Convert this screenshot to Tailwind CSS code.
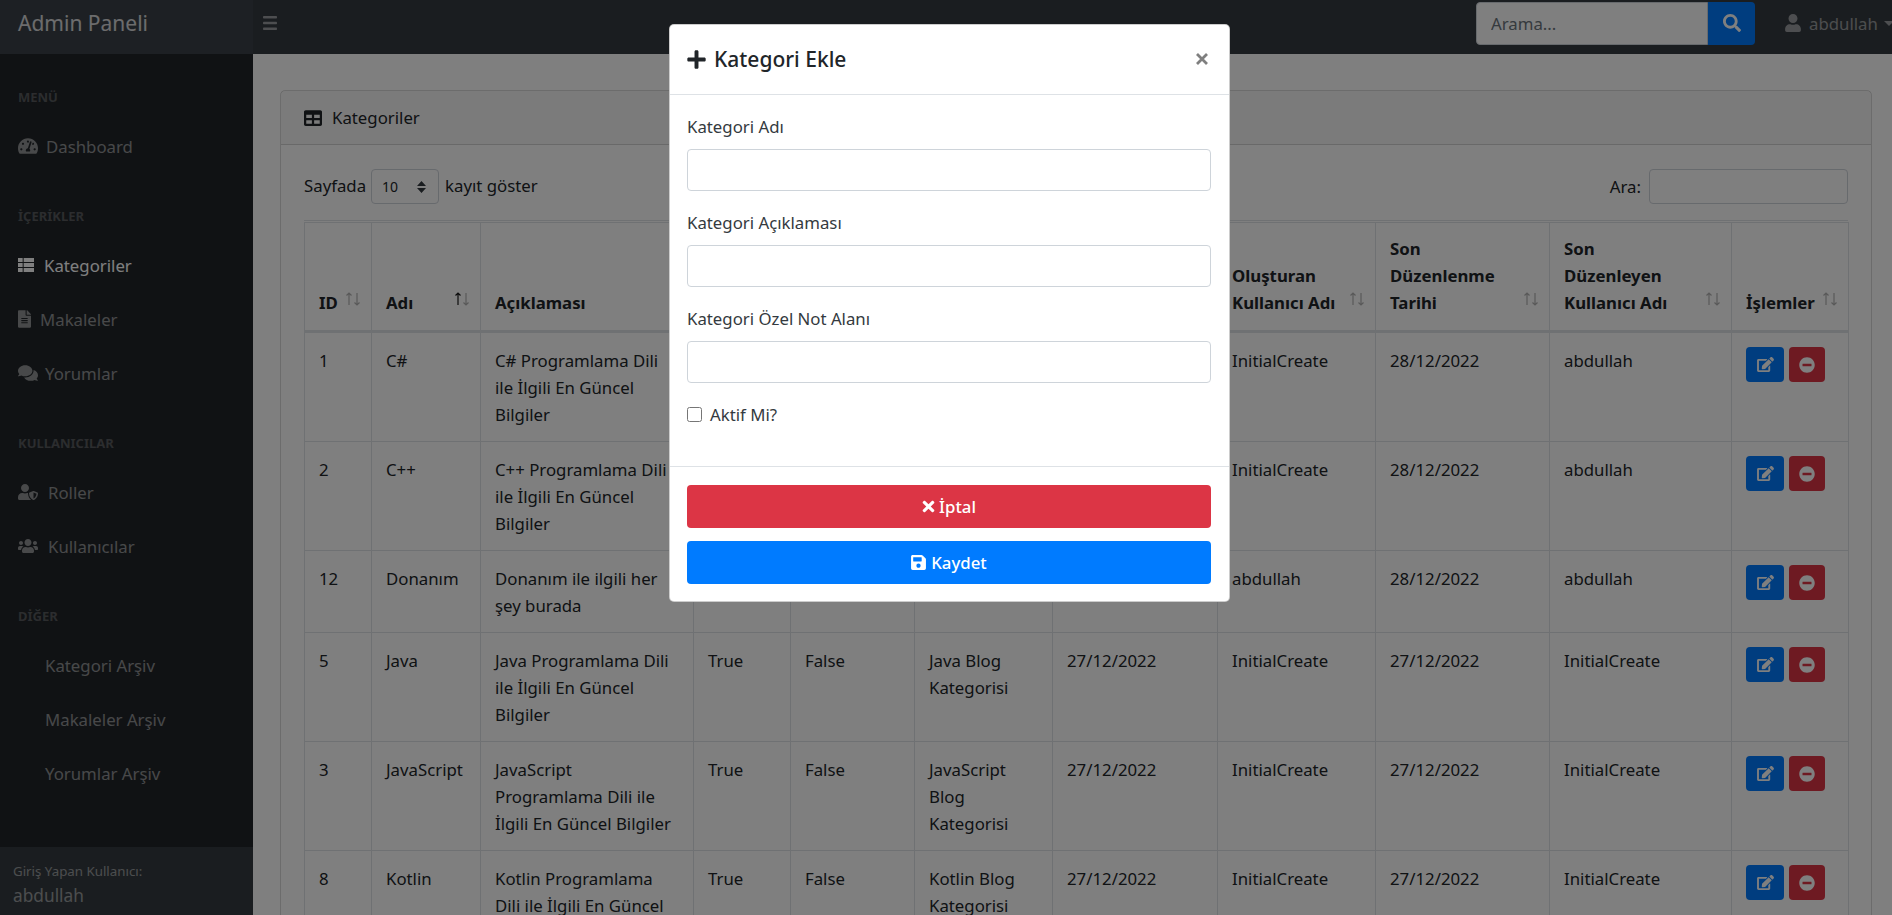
<!DOCTYPE html>
<html lang="tr">
<head>
    <meta charset="UTF-8">
    <title>Admin Paneli</title>
    <script src="https://cdn.jsdelivr.net/npm/@tailwindcss/browser@4"></script>
</head>
<body class="relative h-[915px] overflow-hidden bg-white font-['Noto_Sans',sans-serif] text-[16.8px] leading-[27px] text-[#212529]">

    <svg class="hidden">
        <symbol id="i-plus" viewBox="0 0 448 512"><path d="M416 208H272V64c0-17.67-14.33-32-32-32h-32c-17.67 0-32 14.33-32 32v144H32c-17.67 0-32 14.33-32 32v32c0 17.67 14.33 32 32 32h144v144c0 17.67 14.33 32 32 32h32c17.67 0 32-14.33 32-32V304h144c17.67 0 32-14.33 32-32v-32c0-17.67-14.33-32-32-32z"/></symbol>
        <symbol id="i-search" viewBox="0 0 512 512"><path d="M505 442.7L405.3 343c-4.5-4.5-10.6-7-17-7H372c27.6-35.3 44-79.7 44-128C416 93.1 322.9 0 208 0S0 93.1 0 208s93.1 208 208 208c48.3 0 92.7-16.4 128-44v16.3c0 6.4 2.5 12.5 7 17l99.7 99.7c9.4 9.4 24.6 9.4 33.9 0l28.3-28.3c9.4-9.4 9.4-24.6.1-34zM208 336c-70.7 0-128-57.2-128-128 0-70.7 57.2-128 128-128 70.7 0 128 57.2 128 128 0 70.7-57.2 128-128 128z"/></symbol>
        <symbol id="i-user" viewBox="0 0 448 512"><path d="M224 256c70.7 0 128-57.3 128-128S294.7 0 224 0 96 57.3 96 128s57.3 128 128 128zm89.6 32h-16.7c-22.2 10.2-46.9 16-72.9 16s-50.6-5.8-72.9-16h-16.7C60.2 288 0 348.2 0 422.4V464c0 26.5 21.5 48 48 48h352c26.5 0 48-21.5 48-48v-41.6c0-74.2-60.2-134.4-134.4-134.4z"/></symbol>
        <symbol id="i-times" viewBox="0 0 352 512"><path d="M242.72 256l100.07-100.07c12.28-12.28 12.28-32.19 0-44.48l-22.24-22.24c-12.28-12.28-32.19-12.28-44.48 0L176 189.28 75.93 89.21c-12.28-12.28-32.19-12.28-44.48 0L9.21 111.45c-12.28 12.28-12.28 32.19 0 44.48L109.28 256 9.21 356.07c-12.28 12.28-12.28 32.19 0 44.48l22.24 22.24c12.28 12.28 32.2 12.28 44.48 0L176 322.72l100.07 100.07c12.28 12.28 32.2 12.28 44.48 0l22.24-22.24c12.28-12.28 12.28-32.19 0-44.48L242.72 256z"/></symbol>
        <symbol id="i-save" viewBox="0 0 448 512"><path d="M433.941 129.941l-83.882-83.882A48 48 0 0 0 316.118 32H48C21.49 32 0 53.49 0 80v352c0 26.51 21.49 48 48 48h352c26.51 0 48-21.49 48-48V163.882a48 48 0 0 0-14.059-33.941zM224 416c-35.346 0-64-28.654-64-64 0-35.346 28.654-64 64-64s64 28.654 64 64c0 35.346-28.654 64-64 64zm96-304.52V212c0 6.627-5.373 12-12 12H76c-6.627 0-12-5.373-12-12V108c0-6.627 5.373-12 12-12h228.52c3.183 0 6.235 1.264 8.485 3.515l3.48 3.48A11.996 11.996 0 0 1 320 111.48z"/></symbol>
        <symbol id="i-minus" viewBox="0 0 512 512"><path d="M256 8C119 8 8 119 8 256s111 248 248 248 248-111 248-248S393 8 256 8zM124 296c-6.6 0-12-5.4-12-12v-56c0-6.6 5.4-12 12-12h264c6.6 0 12 5.4 12 12v56c0 6.6-5.4 12-12 12H124z"/></symbol>
        <symbol id="i-edit" viewBox="0 0 576 512"><path d="M402.6 83.2l90.2 90.2c3.8 3.8 3.8 10 0 13.8L274.4 405.6l-92.8 10.3c-12.4 1.4-22.9-9.1-21.5-21.5l10.3-92.8L388.8 83.2c3.8-3.8 10-3.8 13.8 0zm162-22.9l-48.8-48.8c-15.2-15.2-39.9-15.2-55.2 0l-35.4 35.4c-3.8 3.8-3.8 10 0 13.8l90.2 90.2c3.8 3.8 10 3.8 13.8 0l35.4-35.4c15.2-15.3 15.2-40 0-55.2zM384 346.2V448H64V128h229.8c3.2 0 6.2-1.3 8.5-3.5l40-40c7.6-7.6 2.2-20.5-8.5-20.5H48C21.5 64 0 85.5 0 112v352c0 26.5 21.5 48 48 48h352c26.5 0 48-21.5 48-48V306.2c0-10.7-12.9-16-20.5-8.5l-40 40c-2.2 2.3-3.5 5.3-3.5 8.5z"/></symbol>
        <symbol id="i-table" viewBox="0 0 512 512"><path d="M464 32H48C21.49 32 0 53.49 0 80v352c0 26.51 21.49 48 48 48h416c26.51 0 48-21.49 48-48V80c0-26.51-21.49-48-48-48zM224 416H64v-96h160v96zm0-160H64v-96h160v96zm224 160H288v-96h160v96zm0-160H288v-96h160v96z"/></symbol>
        <symbol id="i-list" viewBox="0 0 512 512"><path d="M0 32h149v128H0zM181 32h331v128H181zM0 192h149v128H0zM181 192h331v128H181zM0 352h149v128H0zM181 352h331v128H181z"/></symbol>
        <symbol id="i-file" viewBox="0 0 384 512"><path d="M224 136V0H24C10.7 0 0 10.7 0 24v464c0 13.3 10.7 24 24 24h336c13.3 0 24-10.7 24-24V160H248c-13.2 0-24-10.8-24-24zm64 236c0 6.6-5.4 12-12 12H108c-6.6 0-12-5.4-12-12v-8c0-6.6 5.4-12 12-12h168c6.6 0 12 5.4 12 12v8zm0-64c0 6.6-5.4 12-12 12H108c-6.6 0-12-5.4-12-12v-8c0-6.6 5.4-12 12-12h168c6.6 0 12 5.4 12 12v8zm0-72v8c0 6.6-5.4 12-12 12H108c-6.6 0-12-5.4-12-12v-8c0-6.6 5.4-12 12-12h168c6.6 0 12 5.4 12 12zm96-114.1v6.1H256V0h6.1c6.4 0 12.5 2.5 17 7l97.9 98c4.5 4.5 7 10.6 7 16.9z"/></symbol>
        <symbol id="i-comments" viewBox="0 0 576 512"><path d="M416 192c0-88.4-93.1-160-208-160S0 103.6 0 192c0 34.3 14.1 65.9 38 92-13.4 30.2-35.5 54.2-35.8 54.5-2.2 2.3-2.8 5.7-1.5 8.7S4.8 352 8 352c36.6 0 66.9-12.3 88.7-25 32.2 15.7 70.3 25 111.3 25 114.9 0 208-71.6 208-160zm122 220c23.9-26 38-57.7 38-92 0-66.9-53.5-124.2-129.3-148.1.9 6.6 1.3 13.3 1.3 20.1 0 105.9-107.7 192-240 192-10.8 0-21.3-.8-31.7-1.9C207.8 439.6 281.8 480 368 480c41 0 79.1-9.2 111.3-25 21.8 12.7 52.1 25 88.7 25 3.2 0 6.1-1.9 7.3-4.8 1.3-2.9.7-6.3-1.5-8.7-.3-.3-22.4-24.2-35.8-54.5z"/></symbol>
        <symbol id="i-shield" viewBox="0 0 640 512"><path d="M622.3 271.1l-115.2-45c-4.1-1.6-12.6-3.7-22.2 0l-115.2 45c-10.7 4.2-17.7 14-17.7 24.9 0 111.6 68.7 188.8 132.9 213.9 9.6 3.7 18 1.6 22.2 0C558.4 489.9 640 420.5 640 296c0-10.9-7-20.7-17.7-24.9zM496 462.4V273.3l95.5 37.3c-5.6 86.9-58.1 135.5-95.5 151.8zM224 256c70.7 0 128-57.3 128-128S294.7 0 224 0 96 57.3 96 128s57.3 128 128 128zm96 40c0-2.5.8-4.8 1.1-7.2-2.5-.1-4.9-.8-7.5-.8h-16.7c-22.2 10.2-46.9 16-72.9 16s-50.6-5.8-72.9-16h-16.7C60.2 288 0 348.2 0 422.4V464c0 26.5 21.5 48 48 48h352c6.8 0 13.3-1.5 19.2-4-54-42.9-99.2-116.7-99.2-212z"/></symbol>
        <symbol id="i-users" viewBox="0 0 640 512"><path d="M96 224c35.3 0 64-28.7 64-64s-28.7-64-64-64-64 28.7-64 64 28.7 64 64 64zm448 0c35.3 0 64-28.7 64-64s-28.7-64-64-64-64 28.7-64 64 28.7 64 64 64zm32 32h-64c-17.6 0-33.5 7.1-45.1 18.6 40.3 22.1 68.9 62 75.1 109.4h66c17.7 0 32-14.3 32-32v-32c0-35.3-28.7-64-64-64zm-256 0c61.9 0 112-50.1 112-112S381.9 32 320 32 208 82.1 208 144s50.1 112 112 112zm76.8 32h-8.3c-20.8 10-43.9 16-68.5 16s-47.6-6-68.5-16h-8.3C179.6 288 128 339.6 128 403.2V432c0 26.5 21.5 48 48 48h288c26.5 0 48-21.5 48-48v-28.8c0-63.6-51.6-115.2-115.2-115.2zm-223.7-13.4C161.5 263.1 145.6 256 128 256H64c-35.3 0-64 28.7-64 64v32c0 17.7 14.3 32 32 32h65.9c6.3-47.4 34.9-87.3 75.2-109.4z"/></symbol>
        <symbol id="i-gauge" viewBox="0 0 576 512"><path d="M288 32C128.94 32 0 160.94 0 320c0 52.8 14.25 102.26 39.06 144.8 5.61 9.62 16.3 15.2 27.44 15.2h443c11.14 0 21.83-5.58 27.44-15.2C561.75 422.26 576 372.8 576 320c0-159.06-128.94-288-288-288zm0 64c14.71 0 26.58 10.13 30.32 23.65-1.11 2.26-2.64 4.23-3.45 6.67l-9.22 27.67c-5.13 3.49-10.97 6.01-17.64 6.01-17.67 0-32-14.33-32-32S270.33 96 288 96zM96 384c-17.67 0-32-14.33-32-32s14.33-32 32-32 32 14.33 32 32-14.33 32-32 32zm48-160c-17.67 0-32-14.33-32-32s14.33-32 32-32 32 14.33 32 32-14.33 32-32 32zm246.77-72.41l-61.33 184C343.13 347.33 352 364.54 352 384c0 11.72-3.38 22.55-8.88 32H232.88c-5.5-9.45-8.88-20.28-8.88-32 0-33.94 26.5-61.43 59.9-63.59l61.34-184.01c4.17-12.56 17.73-19.45 30.36-15.17 12.57 4.19 19.35 17.79 15.17 30.36zm14.66 57.2l15.52-46.55c3.47-1.29 7.13-2.23 11.05-2.23 17.67 0 32 14.33 32 32s-14.33 32-32 32c-11.38-.01-20.89-6.28-26.57-15.22zM480 384c-17.67 0-32-14.33-32-32s14.33-32 32-32 32 14.33 32 32-14.33 32-32 32z"/></symbol>
        <symbol id="i-sort" viewBox="0 0 16 14"><path d="M4 1v12M1.500 3.500 4 1l2.500 2.500" fill="none" stroke="currentColor" stroke-width="1.200"/></symbol>
        <symbol id="i-sort2" viewBox="0 0 16 14"><path d="M12 1v12M9.500 10.500 12 13l2.500-2.500" fill="none" stroke="currentColor" stroke-width="1.200"/></symbol>
    </svg>

    <nav class="flex h-[54px] items-center bg-[#343a40] pb-[8px]">
        <div class="-mb-[8px] flex h-[54px] w-[253px] shrink-0 items-center bg-[#3a4148] pb-[8px] pl-[18px]">
            <a class="text-[21px] whitespace-nowrap text-white/80">Admin Paneli</a>
        </div>
        <svg class="ml-[10px] h-[14px] w-[14px] text-white/50" viewBox="0 0 14 14" fill="currentColor"><rect width="14" height="2.600" rx="0.800"/><rect y="5.700" width="14" height="2.600" rx="0.800"/><rect y="11.400" width="14" height="2.600" rx="0.800"/></svg>
        <div class="ml-auto flex h-[43px] w-[279px] items-stretch">
            <input class="min-w-0 flex-1 rounded-l-[4px] border border-[#ced4da] bg-white px-[14px] text-[16.8px] placeholder:text-[#6c757d]" placeholder="Arama...">
            <button class="flex w-[47px] items-center justify-center rounded-r-[4px] bg-[#007bff] text-white"><svg class="h-[18px] w-[18px]" fill="currentColor"><use href="#i-search"/></svg></button>
        </div>
        <div class="ml-[30px] flex w-[107px] shrink-0 items-center overflow-hidden text-white/50">
            <svg class="h-[18px] w-[16px] shrink-0" fill="currentColor"><use href="#i-user"/></svg>
            <span class="ml-[8px]">abdullah</span>
            <span class="ml-[6px] h-0 w-0 border-x-[5px] border-t-[5px] border-x-transparent border-t-white/50"></span>
        </div>
    </nav>

    <div class="flex h-[861px]">
        <aside class="flex w-[253px] shrink-0 flex-col bg-[#212529] text-white/50">
            <div class="flex h-[66px] items-center pt-[20px] pl-[18px] text-[13px] font-bold text-white/25">MENÜ</div>
            <a class="flex h-[54px] items-center pb-[2px] pl-[18px]"><svg class="h-[18px] w-[20px]" fill="currentColor"><use href="#i-gauge"/></svg><span class="ml-[8px]">Dashboard</span></a>
            <div class="flex h-[65px] items-center pt-[20px] pl-[18px] text-[13px] font-bold text-white/25">İÇERİKLER</div>
            <a class="flex h-[54px] items-center pb-[2px] pl-[18px] text-white"><svg class="h-[18px] w-[16px]" fill="currentColor"><use href="#i-list"/></svg><span class="ml-[10px]">Kategoriler</span></a>
            <a class="flex h-[54px] items-center pb-[2px] pl-[18px]"><svg class="h-[18px] w-[13px]" fill="currentColor"><use href="#i-file"/></svg><span class="ml-[9px]">Makaleler</span></a>
            <a class="flex h-[54px] items-center pb-[2px] pl-[18px]"><svg class="h-[18px] w-[20px]" fill="currentColor"><use href="#i-comments"/></svg><span class="ml-[7px]">Yorumlar</span></a>
            <div class="flex h-[65px] items-center pt-[20px] pl-[18px] text-[13px] font-bold text-white/25">KULLANICILAR</div>
            <a class="flex h-[54px] items-center pb-[2px] pl-[18px]"><svg class="h-[18px] w-[20px]" fill="currentColor"><use href="#i-shield"/></svg><span class="ml-[10px]">Roller</span></a>
            <a class="flex h-[54px] items-center pb-[2px] pl-[18px]"><svg class="h-[18px] w-[20px]" fill="currentColor"><use href="#i-users"/></svg><span class="ml-[10px]">Kullanıcılar</span></a>
            <div class="flex h-[65px] items-center pt-[20px] pl-[18px] text-[13px] font-bold text-white/25">DİĞER</div>
            <a class="flex h-[54px] items-center pb-[2px] pl-[45px]">Kategori Arşiv</a>
            <a class="flex h-[54px] items-center pb-[2px] pl-[45px]">Makaleler Arşiv</a>
            <a class="flex h-[54px] items-center pb-[2px] pl-[45px]">Yorumlar Arşiv</a>
            <div class="mt-auto h-[68px] bg-[#343a40] pt-[12px] pl-[13px]">
                <div class="text-[13.3px] leading-[24px]">Giriş Yapan Kullanıcı:</div>
                <div class="text-[17.3px] leading-[26px]">abdullah</div>
            </div>
        </aside>

        <main class="flex-1 overflow-hidden pt-[36px] pl-[27px]">
            <div class="w-[1592px] rounded-t-[5px] border border-black/15">
                <div class="flex h-[54px] items-center border-b border-black/15 bg-black/3 pl-[23px]">
                    <svg class="h-[18px] w-[18px]" fill="currentColor"><use href="#i-table"/></svg>
                    <span class="ml-[10px]">Kategoriler</span>
                </div>
                <div class="px-[23px] pt-[24px]">
                    <div class="flex h-[35px] items-center">
                        <span class="pb-[3px]">Sayfada</span>
                        <div class="relative mr-[6px] ml-[5px] flex h-[35px] w-[68px] items-center rounded-[4px] border border-[#ced4da] pl-[10px] text-[14px]">
                            10
                            <svg class="absolute top-[11px] right-[12px] h-[12px] w-[9px]" viewBox="0 0 9 12" fill="#343a40"><path d="M4.500 0 9 5H0zM4.500 12 0 7h9z"/></svg>
                        </div>
                        <span class="pb-[3px]">kayıt göster</span>
                        <span class="ml-auto">Ara:</span>
                        <input class="ml-[8px] h-[35px] w-[199px] rounded-[4px] border border-[#ced4da]">
                    </div>
                    <div class="mt-[16px] border-t border-[#dee2e6] pt-[1px]">
                        <table class="w-[1544px] table-fixed border-collapse">
                            <colgroup>
                                <col class="w-[67px]"><col class="w-[109px]"><col class="w-[213px]"><col class="w-[97px]"><col class="w-[124px]"><col class="w-[138px]"><col class="w-[165px]"><col class="w-[158px]"><col class="w-[174px]"><col class="w-[182px]"><col class="w-[117px]">
                            </colgroup>
                            <thead class="text-left align-bottom font-bold [&_th]:relative [&_th]:border [&_th]:border-b-[3px] [&_th]:border-[#dee2e6] [&_th]:px-[14px] [&_th]:pt-[12px] [&_th]:pb-[14px]">
                                <tr>
                                    <th>ID<span class="absolute right-[10px] bottom-[24px] flex text-black/30"><svg class="h-[14px] w-[16px]"><use href="#i-sort"/></svg><svg class="-ml-[16px] h-[14px] w-[16px]"><use href="#i-sort2"/></svg></span></th>
                                    <th>Adı<span class="absolute right-[10px] bottom-[24px] flex text-black/30"><svg class="h-[14px] w-[16px] text-black/90"><use href="#i-sort"/></svg><svg class="-ml-[16px] h-[14px] w-[16px]"><use href="#i-sort2"/></svg></span></th>
                                    <th>Açıklaması</th>
                                    <th>Aktif Mi?</th>
                                    <th>Silindi Mi?</th>
                                    <th>Not</th>
                                    <th>Oluşturma Tarihi</th>
                                    <th>Oluşturan<br>Kullanıcı Adı<span class="absolute right-[10px] bottom-[24px] flex text-black/30"><svg class="h-[14px] w-[16px]"><use href="#i-sort"/></svg><svg class="-ml-[16px] h-[14px] w-[16px]"><use href="#i-sort2"/></svg></span></th>
                                    <th>Son<br>Düzenlenme<br>Tarihi<span class="absolute right-[10px] bottom-[24px] flex text-black/30"><svg class="h-[14px] w-[16px]"><use href="#i-sort"/></svg><svg class="-ml-[16px] h-[14px] w-[16px]"><use href="#i-sort2"/></svg></span></th>
                                    <th>Son<br>Düzenleyen<br>Kullanıcı Adı<span class="absolute right-[10px] bottom-[24px] flex text-black/30"><svg class="h-[14px] w-[16px]"><use href="#i-sort"/></svg><svg class="-ml-[16px] h-[14px] w-[16px]"><use href="#i-sort2"/></svg></span></th>
                                    <th>İşlemler<span class="absolute right-[10px] bottom-[24px] flex text-black/30"><svg class="h-[14px] w-[16px]"><use href="#i-sort"/></svg><svg class="-ml-[16px] h-[14px] w-[16px]"><use href="#i-sort2"/></svg></span></th>
                                </tr>
                            </thead>
                            <tbody class="align-top whitespace-nowrap [&_td]:border [&_td]:border-[#dee2e6] [&_td]:px-[14px] [&_td]:pt-[14px] [&_td]:pb-[13px]">
                                <tr>
                                    <td>1</td><td>C#</td><td>C# Programlama Dili<br>ile İlgili En Güncel<br>Bilgiler</td><td>True</td><td>False</td><td>C# Blog<br>Kategorisi</td><td>27/12/2022</td><td>InitialCreate</td><td>28/12/2022</td><td>abdullah</td>
                                    <td><div class="flex gap-[5px]"><button class="flex h-[35px] w-[38px] items-center justify-center rounded-[4px] bg-[#007bff] text-white"><svg class="h-[15px] w-[17px]" fill="currentColor"><use href="#i-edit"/></svg></button><button class="flex h-[35px] w-[36px] items-center justify-center rounded-[4px] bg-[#dc3545] text-white"><svg class="h-[16px] w-[16px]" fill="currentColor"><use href="#i-minus"/></svg></button></div></td>
                                </tr>
                                <tr>
                                    <td>2</td><td>C++</td><td>C++ Programlama Dili<br>ile İlgili En Güncel<br>Bilgiler</td><td>True</td><td>False</td><td>C++ Blog<br>Kategorisi</td><td>27/12/2022</td><td>InitialCreate</td><td>28/12/2022</td><td>abdullah</td>
                                    <td><div class="flex gap-[5px]"><button class="flex h-[35px] w-[38px] items-center justify-center rounded-[4px] bg-[#007bff] text-white"><svg class="h-[15px] w-[17px]" fill="currentColor"><use href="#i-edit"/></svg></button><button class="flex h-[35px] w-[36px] items-center justify-center rounded-[4px] bg-[#dc3545] text-white"><svg class="h-[16px] w-[16px]" fill="currentColor"><use href="#i-minus"/></svg></button></div></td>
                                </tr>
                                <tr>
                                    <td>12</td><td>Donanım</td><td>Donanım ile ilgili her<br>şey burada</td><td>True</td><td>False</td><td>Donanım</td><td>28/12/2022</td><td>abdullah</td><td>28/12/2022</td><td>abdullah</td>
                                    <td><div class="flex gap-[5px]"><button class="flex h-[35px] w-[38px] items-center justify-center rounded-[4px] bg-[#007bff] text-white"><svg class="h-[15px] w-[17px]" fill="currentColor"><use href="#i-edit"/></svg></button><button class="flex h-[35px] w-[36px] items-center justify-center rounded-[4px] bg-[#dc3545] text-white"><svg class="h-[16px] w-[16px]" fill="currentColor"><use href="#i-minus"/></svg></button></div></td>
                                </tr>
                                <tr>
                                    <td>5</td><td>Java</td><td>Java Programlama Dili<br>ile İlgili En Güncel<br>Bilgiler</td><td>True</td><td>False</td><td>Java Blog<br>Kategorisi</td><td>27/12/2022</td><td>InitialCreate</td><td>27/12/2022</td><td>InitialCreate</td>
                                    <td><div class="flex gap-[5px]"><button class="flex h-[35px] w-[38px] items-center justify-center rounded-[4px] bg-[#007bff] text-white"><svg class="h-[15px] w-[17px]" fill="currentColor"><use href="#i-edit"/></svg></button><button class="flex h-[35px] w-[36px] items-center justify-center rounded-[4px] bg-[#dc3545] text-white"><svg class="h-[16px] w-[16px]" fill="currentColor"><use href="#i-minus"/></svg></button></div></td>
                                </tr>
                                <tr>
                                    <td>3</td><td>JavaScript</td><td>JavaScript<br>Programlama Dili ile<br>İlgili En Güncel Bilgiler</td><td>True</td><td>False</td><td>JavaScript<br>Blog<br>Kategorisi</td><td>27/12/2022</td><td>InitialCreate</td><td>27/12/2022</td><td>InitialCreate</td>
                                    <td><div class="flex gap-[5px]"><button class="flex h-[35px] w-[38px] items-center justify-center rounded-[4px] bg-[#007bff] text-white"><svg class="h-[15px] w-[17px]" fill="currentColor"><use href="#i-edit"/></svg></button><button class="flex h-[35px] w-[36px] items-center justify-center rounded-[4px] bg-[#dc3545] text-white"><svg class="h-[16px] w-[16px]" fill="currentColor"><use href="#i-minus"/></svg></button></div></td>
                                </tr>
                                <tr>
                                    <td>8</td><td>Kotlin</td><td>Kotlin Programlama<br>Dili ile İlgili En Güncel<br>Bilgiler</td><td>True</td><td>False</td><td>Kotlin Blog<br>Kategorisi</td><td>27/12/2022</td><td>InitialCreate</td><td>27/12/2022</td><td>InitialCreate</td>
                                    <td><div class="flex gap-[5px]"><button class="flex h-[35px] w-[38px] items-center justify-center rounded-[4px] bg-[#007bff] text-white"><svg class="h-[15px] w-[17px]" fill="currentColor"><use href="#i-edit"/></svg></button><button class="flex h-[35px] w-[36px] items-center justify-center rounded-[4px] bg-[#dc3545] text-white"><svg class="h-[16px] w-[16px]" fill="currentColor"><use href="#i-minus"/></svg></button></div></td>
                                </tr>
                            </tbody>
                        </table>
                    </div>
                </div>
            </div>
        </main>
    </div>

    <!-- modal backdrop + dialog -->
    <div class="absolute inset-0 bg-black/50"></div>
    <div class="absolute top-[24px] left-[669px] w-[561px] rounded-[5px] border border-black/20 bg-white">
        <div class="flex h-[70px] items-center border-b border-[#dee2e6] pr-[21px] pl-[17px]">
            <svg class="h-[21px] w-[19px]" fill="currentColor"><use href="#i-plus"/></svg>
            <h5 class="ml-[8px] text-[21px] font-medium">Kategori Ekle</h5>
            <svg class="mb-[2px] ml-auto h-[12px] w-[12px] text-[#7f7f7f]" viewBox="0 0 12 12"><path d="M1 1l10 10M11 1 1 11" fill="none" stroke="currentColor" stroke-width="2.800"/></svg>
        </div>
        <div class="h-[371px] pt-[18px] pr-[18px] pl-[17px] text-[#343a40]">
            <label class="block">Kategori Adı</label>
            <input class="mt-[9px] mb-[18px] block h-[42px] w-full rounded-[4px] border border-[#ced4da]">
            <label class="block">Kategori Açıklaması</label>
            <input class="mt-[9px] mb-[18px] block h-[42px] w-full rounded-[4px] border border-[#ced4da]">
            <label class="block">Kategori Özel Not Alanı</label>
            <input class="mt-[9px] mb-[18px] block h-[42px] w-full rounded-[4px] border border-[#ced4da]">
            <label class="flex items-center"><input type="checkbox" class="h-[15px] w-[15px]"><span class="ml-[8px]">Aktif Mi?</span></label>
        </div>
        <div class="border-t border-[#dee2e6] pt-[18px] pr-[18px] pb-[17px] pl-[17px]">
            <button class="flex h-[43px] w-full items-center justify-center rounded-[4px] bg-[#dc3545] font-medium text-white"><svg class="h-[17px] w-[13px]" fill="currentColor"><use href="#i-times"/></svg><span class="ml-[4px]">İptal</span></button>
            <button class="mt-[13px] flex h-[43px] w-full items-center justify-center rounded-[4px] bg-[#007bff] font-medium text-white"><svg class="h-[17px] w-[15px]" fill="currentColor"><use href="#i-save"/></svg><span class="ml-[5px]">Kaydet</span></button>
        </div>
    </div>
</body>
</html>
